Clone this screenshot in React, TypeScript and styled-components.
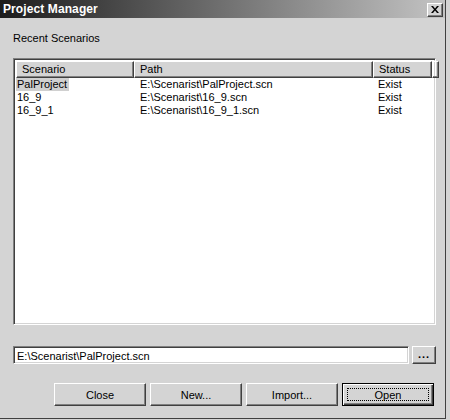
import * as React from 'react';
import styled, { createGlobalStyle } from 'styled-components';

const GlobalStyle = createGlobalStyle`
  html, body {
    margin: 0;
    padding: 0;
    background: #d4d4d4;
  }
  * {
    box-sizing: border-box;
  }
`;

const Screen = styled.div`
  width: 450px;
  height: 420px;
  background: #d4d4d4;
  font-family: 'Liberation Sans', Arial, sans-serif;
  font-size: 11px;
  color: #000;
  overflow: hidden;
`;

const Window = styled.div`
  width: 446px;
  height: 419px;
  display: flex;
  flex-direction: column;
  background: #d4d4d4;
  border-right: 1px solid #404040;
  border-bottom: 1px solid #404040;
`;

const TitleBar = styled.div`
  height: 18px;
  flex: none;
  display: flex;
  align-items: center;
  justify-content: space-between;
  padding: 0 2px 0 3px;
  background: linear-gradient(to right, #1c1c1c, #c4c4c4);
`;

const TitleText = styled.span`
  color: #fff;
  font-weight: bold;
  font-size: 12px;
  letter-spacing: 0.1px;
`;

const Raised = styled.button`
  font-family: 'Liberation Sans', Arial, sans-serif;
  font-size: 11px;
  color: #000;
  background: #d4d4d4;
  padding: 0;
  margin: 0;
  border: 1px solid;
  border-color: #fff #404040 #404040 #fff;
  box-shadow: inset -1px -1px 0 #808080;
  display: flex;
  align-items: center;
  justify-content: center;
`;

const CloseBox = styled(Raised)`
  width: 16px;
  height: 14px;
  margin-top: 1px;
`;

const Body = styled.div`
  flex: 1;
  display: flex;
  flex-direction: column;
  padding: 14px 9px 12px 13px;
`;

const Label = styled.div`
  height: 13px;
  line-height: 13px;
  margin-bottom: 13px;
`;

const Sunken = styled.div`
  border: 1px solid;
  border-color: #808080 #fff #fff #808080;
  box-shadow: inset 1px 1px 0 #404040, inset -1px -1px 0 #d4d4d4;
  background: #fff;
`;

const ListBox = styled(Sunken)`
  height: 267px;
  padding: 2px;
  display: flex;
  flex-direction: column;
`;

const HeaderRow = styled.div`
  display: flex;
  height: 17px;
  flex: none;
  background: #d4d4d4;
`;

const HeaderCell = styled.div<{ $w?: number }>`
  width: ${p => (p.$w ? `${p.$w}px` : 'auto')};
  flex: ${p => (p.$w ? 'none' : '1')};
  height: 17px;
  line-height: 15px;
  padding-left: 5px;
  border: 1px solid;
  border-color: #fff #404040 #404040 #fff;
  box-shadow: inset -1px -1px 0 #808080;
  white-space: nowrap;
  overflow: hidden;
`;

const Row = styled.div`
  display: flex;
  height: 13px;
  line-height: 13px;
  margin-top: 0;
`;

const Cell = styled.div<{ $w: number }>`
  width: ${p => p.$w}px;
  flex: none;
  padding-left: 3px;
  white-space: nowrap;
  overflow: hidden;
`;

const Selected = styled.span<{ $on: boolean }>`
  display: inline-block;
  padding: 0 2px 0 1px;
  background: ${p => (p.$on ? '#d0d0d0' : 'transparent')};
`;

const PathRow = styled.div`
  display: flex;
  gap: 3px;
  margin-top: 21px;
  height: 18px;
`;

const PathInput = styled(Sunken)`
  flex: 1;
  height: 18px;
  line-height: 14px;
  padding: 2px 3px;
  white-space: nowrap;
`;

const BrowseButton = styled(Raised)`
  width: 24px;
  height: 18px;
  font-weight: bold;
  letter-spacing: 1px;
  padding-bottom: 3px;
`;

const ButtonRow = styled.div`
  display: flex;
  justify-content: flex-end;
  gap: 4px;
  margin-top: 19px;
  padding-right: 2px;
`;

const PushButton = styled(Raised)<{ $default?: boolean }>`
  width: 92px;
  height: 23px;
  position: relative;
  ${p =>
    p.$default
      ? `
    border: 1px solid #000;
    box-shadow: inset 1px 1px 0 #fff, inset -1px -1px 0 #404040, inset -2px -2px 0 #808080;
    &::after {
      content: '';
      position: absolute;
      left: 4px;
      top: 4px;
      right: 4px;
      bottom: 4px;
      border: 1px dotted #000;
    }
  `
      : ''}
`;

const rows = [
  { name: 'PalProject', path: 'E:\\Scenarist\\PalProject.scn', status: 'Exist' },
  { name: '16_9', path: 'E:\\Scenarist\\16_9.scn', status: 'Exist' },
  { name: '16_9_1', path: 'E:\\Scenarist\\16_9_1.scn', status: 'Exist' },
];

const App = () => {
  const [selected] = React.useState(0);

  return (
    <Screen>
      <GlobalStyle />
      <Window>
        <TitleBar>
          <TitleText>Project Manager</TitleText>
          <CloseBox aria-label="Close">
            <svg width="8" height="7" viewBox="0 0 8 7">
              <path d="M0 0h2l2 2.5L6 0h2L5 3.5 8 7H6L4 4.5 2 7H0l3-3.5z" fill="#000" />
            </svg>
          </CloseBox>
        </TitleBar>
        <Body>
          <Label>Recent Scenarios</Label>
          <ListBox>
            <HeaderRow>
              <HeaderCell $w={118}>Scenario</HeaderCell>
              <HeaderCell $w={239}>Path</HeaderCell>
              <HeaderCell $w={59}>Status</HeaderCell>
              <HeaderCell />
            </HeaderRow>
            {rows.map((r, i) => (
              <Row key={r.name}>
                <Cell $w={118} style={{ paddingLeft: 0 }}>
                  <Selected $on={i === selected}>{r.name}</Selected>
                </Cell>
                <Cell $w={239} style={{ paddingLeft: 6 }}>{r.path}</Cell>
                <Cell $w={59} style={{ paddingLeft: 5 }}>{r.status}</Cell>
              </Row>
            ))}
          </ListBox>
          <PathRow>
            <PathInput>E:\Scenarist\PalProject.scn</PathInput>
            <BrowseButton>...</BrowseButton>
          </PathRow>
          <ButtonRow>
            <PushButton>Close</PushButton>
            <PushButton>New...</PushButton>
            <PushButton>Import...</PushButton>
            <PushButton $default>Open</PushButton>
          </ButtonRow>
        </Body>
      </Window>
    </Screen>
  );
};

export default App;
